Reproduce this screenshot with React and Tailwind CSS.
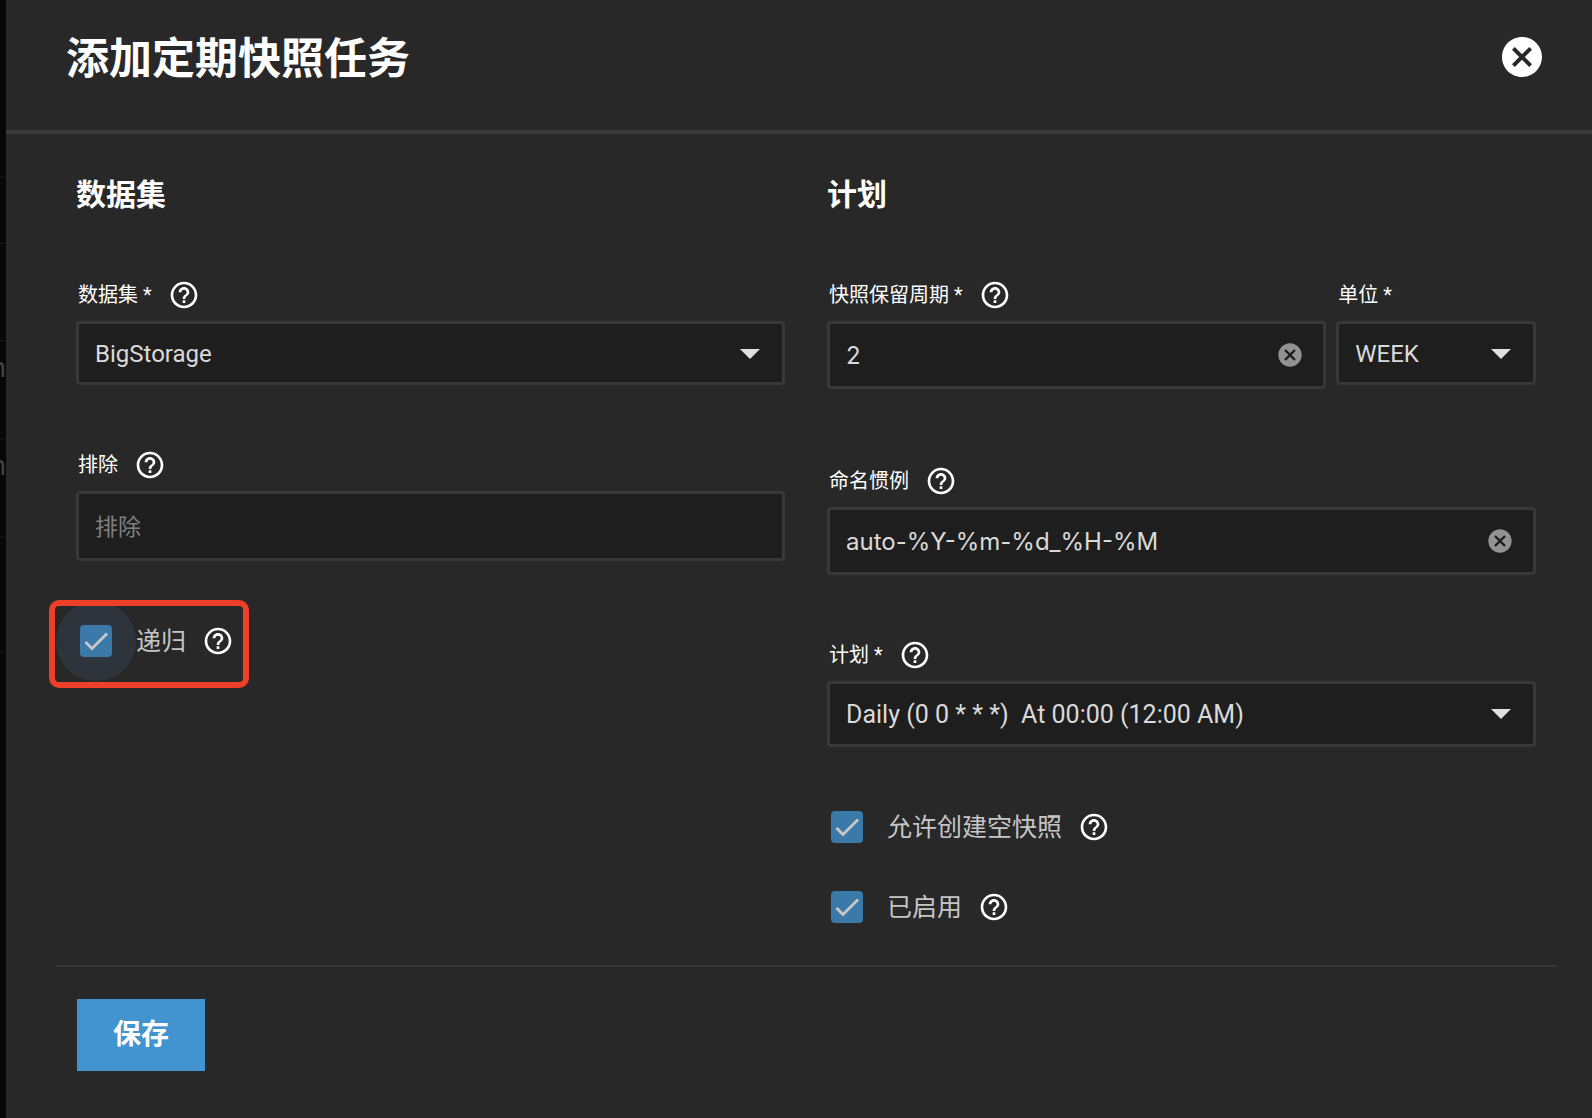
import { useState } from 'react';
import { MdCancel, MdHelpOutline } from 'react-icons/md';

const fieldBox =
  'block w-full appearance-none rounded-[4px] border-[3px] border-[#383838] bg-[#1e1e1e] pl-4 text-[#dadada] outline-none';

const backdropRows = [
  { id: 'title', text: '', height: 'h-[178px]' },
  { id: 'head', text: '', height: 'h-[66px]' },
  { id: 'row-1', text: '', height: 'h-[98px]' },
  { id: 'row-2', text: 'n', height: 'h-[98px]' },
  { id: 'row-3', text: 'n', height: 'h-[98px]' },
  { id: 'foot', text: '', height: 'h-[115px]' },
];

function HelpButton({ label }) {
  return (
    <button type="button" aria-label={label} className="ml-4 shrink-0 text-white">
      <MdHelpOutline size={32} />
    </button>
  );
}

function FieldLabel({ htmlFor, text, required, help = true }) {
  return (
    <div className="mb-[9px] flex h-[34px] items-center pl-0.5">
      <label htmlFor={htmlFor} className="pb-px text-xl text-white">
        {text}
        {required && ' *'}
      </label>
      {help && <HelpButton label={text} />}
    </div>
  );
}

function SelectField({ id, label, required, help, options, size = 'h-16 text-2xl' }) {
  return (
    <div>
      <FieldLabel htmlFor={id} text={label} required={required} help={help} />
      <div className="relative">
        <select id={id} className={`${fieldBox} ${size} pt-0.5 pr-14`}>
          {options.map((option) => (
            <option key={option}>{option}</option>
          ))}
        </select>
        <svg
          viewBox="0 0 20 10"
          className="pointer-events-none absolute top-7 right-[25px] h-[10px] w-5 fill-[#e0e0e0]"
        >
          <path d="M0 0h20L10 10z" />
        </svg>
      </div>
    </div>
  );
}

function TextField({ id, label, required, placeholder, initial = '', clearable, size = 'h-[68px]' }) {
  const [value, setValue] = useState(initial);

  return (
    <div>
      <FieldLabel htmlFor={id} text={label} required={required} />
      <div className="relative">
        <input
          id={id}
          type="text"
          value={value}
          placeholder={placeholder}
          onChange={(e) => setValue(e.target.value)}
          className={`${fieldBox} ${size} pr-16 font-['Inter','Noto_Sans_CJK_SC',sans-serif] text-2xl placeholder:text-[23px] placeholder:text-[#808080]`}
        />
        {clearable && (
          <button
            type="button"
            aria-label={label}
            onClick={() => setValue('')}
            className="absolute inset-y-0 right-[22px] text-[#929292]"
          >
            <MdCancel size={28} />
          </button>
        )}
      </div>
    </div>
  );
}

function CheckboxField({ id, label, focused, highlighted }) {
  const [checked, setChecked] = useState(true);

  return (
    <div className="relative flex h-20 w-fit items-center pl-1">
      {focused && (
        <span className="absolute top-0 -left-5 size-20 rounded-full bg-[#2d343c]" />
      )}
      <span className="relative size-8 shrink-0">
        <input
          id={id}
          type="checkbox"
          checked={checked}
          onChange={(e) => setChecked(e.target.checked)}
          className="block size-8 appearance-none rounded-[4px] border-2 border-[#c5c5c5] checked:border-0 checked:bg-[#3b79a8]"
        />
        {checked && (
          <svg
            viewBox="0 0 24 24"
            className="pointer-events-none absolute inset-0 size-8 fill-none stroke-[#c8c8c8] stroke-[2.13]"
          >
            <path d="M4.1 12.7 9 17.6 20.3 6.3" />
          </svg>
        )}
      </span>
      <label htmlFor={id} className="relative ml-6 pt-0.5 text-[25px] text-[#c6c6c6]">
        {label}
      </label>
      <HelpButton label={label} />
      {highlighted && (
        <span className="pointer-events-none absolute -top-px -right-[15px] -bottom-[7px] -left-[27px] rounded-[10px] border-[6px] border-[#ee4028]" />
      )}
    </div>
  );
}

export default function App() {
  return (
    <div className="flex min-h-screen bg-[#070707] font-['Roboto','Noto_Sans_CJK_SC',sans-serif]">
      {/* Page behind the slide-in */}
      <div
        className="w-1.5 shrink-0 overflow-hidden text-[28px] leading-8 text-[#424242]"
        aria-hidden="true"
      >
        {backdropRows.map((row) => (
          <div
            key={row.id}
            className={`${row.height} flex justify-end border-b-2 border-[#0e0e0e] pt-2.5`}
          >
            {row.text}
          </div>
        ))}
      </div>

      <main className="min-w-0 flex-1 bg-[#282828]">
        <header className="flex h-[134px] items-start justify-between border-b-4 border-[#383838] pt-[33px] pr-[46px] pl-[60px]">
          <h1 className="pt-0.5 text-[43px] leading-[48px] font-bold text-white">
            添加定期快照任务
          </h1>
          <button type="button" aria-label="关闭" className="text-white">
            <MdCancel size={48} />
          </button>
        </header>

        <form className="mr-[35px] ml-[49px]" onSubmit={(e) => e.preventDefault()}>
          <div className="grid grid-cols-2 gap-x-[42px] px-[21px] pb-[18px]">
            <section className="pt-[42px]">
              <h2 className="text-[30px] leading-[38px] font-bold text-white">数据集</h2>
              <div className="mt-16 flex flex-col gap-[63px]">
                <SelectField id="dataset" label="数据集" required options={['BigStorage']} />
                <TextField id="exclude" label="排除" placeholder="排除" size="h-[70px]" />
              </div>
              <div className="mt-10">
                <CheckboxField id="recursive" label="递归" focused highlighted />
              </div>
            </section>

            <section className="pt-[42px]">
              <h2 className="text-[30px] leading-[38px] font-bold text-white">计划</h2>
              <div className="mt-16 flex flex-col gap-[63px]">
                <div className="grid grid-cols-[5fr_2fr] gap-x-[10px] pb-3">
                  <TextField id="lifetime" label="快照保留周期" required initial="2" clearable />
                  <SelectField
                    id="unit"
                    label="单位"
                    required
                    help={false}
                    options={['WEEK', 'HOUR', 'DAY', 'MONTH', 'YEAR']}
                  />
                </div>
                <TextField
                  id="naming"
                  label="命名惯例"
                  initial="auto-%Y-%m-%d_%H-%M"
                  clearable
                />
                <SelectField
                  id="schedule"
                  label="计划"
                  required
                  options={['Daily (0 0 * * *)\u00a0 At 00:00 (12:00 AM)']}
                  size="h-[66px] text-[25px]"
                />
              </div>
              <div className="mt-10">
                <CheckboxField id="allow-empty" label="允许创建空快照" />
                <CheckboxField id="enabled" label="已启用" />
              </div>
            </section>
          </div>

          <footer className="border-t-2 border-[#383838] px-[22px] py-8">
            <button
              type="submit"
              className="h-[72px] w-32 bg-[#4194d0] text-[28px] font-bold text-white"
            >
              保存
            </button>
          </footer>
        </form>
      </main>
    </div>
  );
}
